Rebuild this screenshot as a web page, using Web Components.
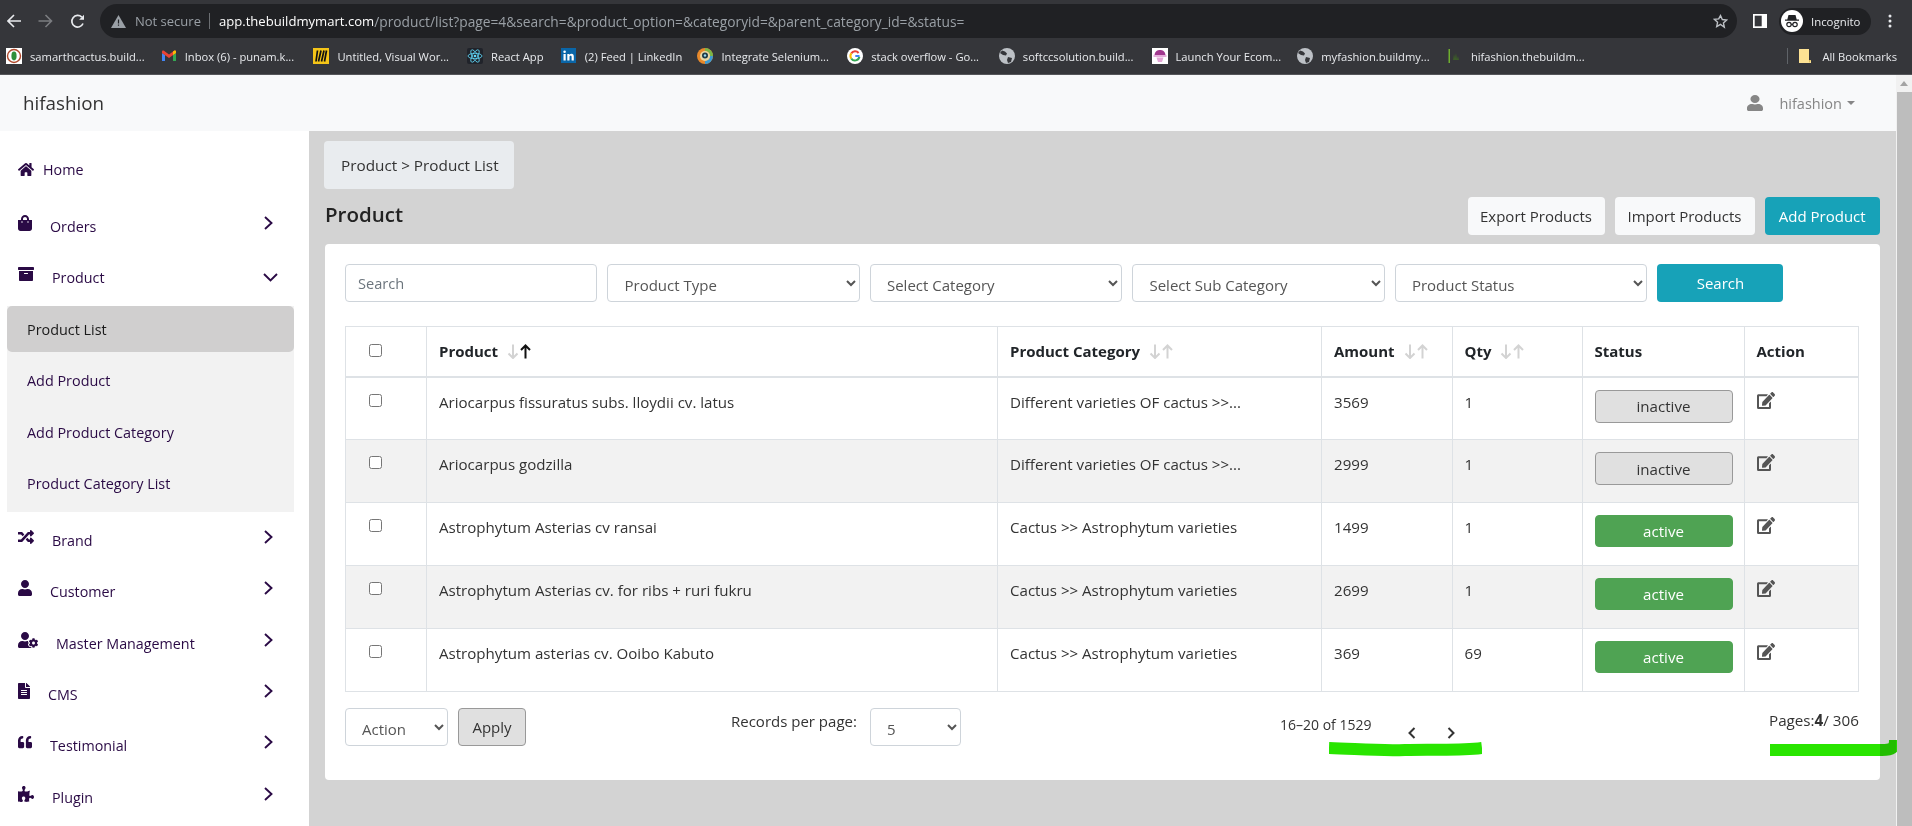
<!DOCTYPE html>
<html lang="en">
<head>
<meta charset="utf-8">
<title>hifashion</title>
<style>
  html, body { margin: 0; height: 826px; overflow: hidden; background: #d3d3d3; }
  body { font-family: "Open Sans", "Noto Sans", sans-serif; font-size: 15px; color: #212529; position: relative; }
</style>
</head>
<body>
<browser-chrome></browser-chrome>
<app-page>
  <top-nav slot="top" brand="hifashion" user="hifashion"></top-nav>
  <side-nav slot="side"></side-nav>
  <page-crumb>Product &gt; Product List</page-crumb>
  <page-head>Product</page-head>
  <product-card></product-card>
</app-page>
<marker-scribble kind="a"></marker-scribble>
<marker-scribble kind="b"></marker-scribble>

<script>
const FA = {
  home: ['0 0 576 512', 'M280.37 148.26L96 300.11V464a16 16 0 0 0 16 16l112.06-.29a16 16 0 0 0 15.92-16V368a16 16 0 0 1 16-16h64a16 16 0 0 1 16 16v95.64a16 16 0 0 0 16 16.05L464 480a16 16 0 0 0 16-16V300L295.67 148.26a12.19 12.19 0 0 0-15.3 0zM571.6 251.47L488 182.56V44.05a12 12 0 0 0-12-12h-56a12 12 0 0 0-12 12v72.61L318.47 43a48 48 0 0 0-61 0L4.34 251.47a12 12 0 0 0-1.6 16.9l25.5 31A12 12 0 0 0 45.15 301l235.22-193.74a12.19 12.19 0 0 1 15.3 0L530.9 301a12 12 0 0 0 16.9-1.6l25.5-31a12 12 0 0 0-1.7-16.93z'],
  bag: ['0 0 448 512', 'M352 160v-32C352 57.42 294.579 0 224 0 153.42 0 96 57.42 96 128v32H0v272c0 44.183 35.817 80 80 80h288c44.183 0 80-35.817 80-80V160h-96zm-192-32c0-35.29 28.71-64 64-64s64 28.71 64 64v32H160v-32zm160 120c-13.255 0-24-10.745-24-24s10.745-24 24-24 24 10.745 24 24-10.745 24-24 24zm-192 0c-13.255 0-24-10.745-24-24s10.745-24 24-24 24 10.745 24 24-10.745 24-24 24z'],
  archive: ['0 0 512 512', 'M32 448c0 17.7 14.3 32 32 32h384c17.7 0 32-14.3 32-32V160H32v288zm160-212c0-6.6 5.4-12 12-12h104c6.6 0 12 5.4 12 12v8c0 6.6-5.4 12-12 12H204c-6.6 0-12-5.4-12-12v-8zM480 32H32C14.3 32 0 46.3 0 64v48c0 8.8 7.2 16 16 16h480c8.8 0 16-7.2 16-16V64c0-17.7-14.3-32-32-32z'],
  random: ['0 0 512 512', 'M504.971 359.029c9.373 9.373 9.373 24.569 0 33.941l-80 79.984c-15.01 15.01-40.971 4.49-40.971-16.971V416h-58.785a12.004 12.004 0 0 1-8.773-3.812l-70.556-75.596 53.333-57.143L352 336h32v-39.981c0-21.438 25.943-31.998 40.971-16.971l80 79.981zM12 176h84l52.781 56.551 53.333-57.143-70.556-75.596A11.999 11.999 0 0 0 122.785 96H12c-6.627 0-12 5.373-12 12v56c0 6.627 5.373 12 12 12zm372 0v39.984c0 21.46 25.961 31.98 40.971 16.971l80-79.984c9.373-9.373 9.373-24.569 0-33.941l-80-79.981C409.943 24.021 384 34.582 384 56.019V96h-58.785a12.004 12.004 0 0 0-8.773 3.812L96 336H12c-6.627 0-12 5.373-12 12v56c0 6.627 5.373 12 12 12h110.785c3.326 0 6.503-1.381 8.773-3.812L352 176h32z'],
  user: ['0 0 448 512', 'M224 256c70.7 0 128-57.3 128-128S294.7 0 224 0 96 57.3 96 128s57.3 128 128 128zm89.6 32h-16.7c-22.2 10.2-46.9 16-72.9 16s-50.6-5.8-72.9-16h-16.7C60.2 288 0 348.2 0 422.4V464c0 26.5 21.5 48 48 48h352c26.5 0 48-21.5 48-48v-41.6c0-74.2-60.2-134.4-134.4-134.4z'],
  usercog: ['0 0 640 512', 'M610.5 373.3c2.6-14.1 2.6-28.5 0-42.6l25.8-14.9c3-1.7 4.3-5.2 3.3-8.5-6.7-21.6-18.2-41.2-33.2-57.4-2.3-2.5-6-3.1-9-1.4l-25.8 14.9c-10.9-9.3-23.4-16.5-36.9-21.3v-29.8c0-3.4-2.4-6.4-5.7-7.1-22.3-5-45-4.8-66.2 0-3.3.7-5.7 3.7-5.7 7.1v29.8c-13.5 4.8-26 12-36.9 21.3l-25.8-14.9c-2.9-1.7-6.7-1.1-9 1.4-15 16.2-26.5 35.8-33.2 57.4-1 3.3.4 6.8 3.3 8.5l25.8 14.9c-2.6 14.1-2.6 28.5 0 42.6l-25.8 14.9c-3 1.7-4.3 5.2-3.3 8.5 6.7 21.6 18.2 41.1 33.2 57.4 2.3 2.5 6 3.1 9 1.4l25.8-14.9c10.9 9.3 23.4 16.5 36.9 21.3v29.8c0 3.4 2.4 6.4 5.7 7.1 22.3 5 45 4.8 66.2 0 3.3-.7 5.7-3.7 5.7-7.1v-29.8c13.5-4.8 26-12 36.9-21.3l25.8 14.9c2.9 1.7 6.7 1.1 9-1.4 15-16.2 26.5-35.8 33.2-57.4 1-3.3-.4-6.8-3.3-8.5l-25.8-14.9zM496 400.5c-26.8 0-48.5-21.8-48.5-48.5s21.8-48.5 48.5-48.5 48.5 21.8 48.5 48.5-21.7 48.5-48.5 48.5zM224 256c70.7 0 128-57.3 128-128S294.7 0 224 0 96 57.3 96 128s57.3 128 128 128zm201.2 226.5c-2.3-1.2-4.6-2.6-6.8-3.9l-7.9 4.6c-6 3.4-12.8 5.3-19.6 5.3-10.9 0-21.4-4.6-28.9-12.6-18.3-19.8-32.3-43.9-40.2-69.6-5.5-17.7 1.9-36.4 17.9-45.7l7.9-4.6c-.1-2.6-.1-5.2 0-7.8l-7.9-4.6c-16-9.2-23.4-28-17.9-45.7.9-2.9 2.2-5.8 3.2-8.7-3.8-.3-7.5-1.2-11.4-1.2h-16.7c-22.2 10.2-46.9 16-72.9 16s-50.6-5.8-72.9-16h-16.7C60.2 288 0 348.2 0 422.4V464c0 26.5 21.5 48 48 48h352c10.1 0 19.5-3.2 27.2-8.5-1.2-3.8-2-7.7-2-11.8v-9.2z'],
  file: ['0 0 384 512', 'M224 136V0H24C10.7 0 0 10.7 0 24v464c0 13.3 10.7 24 24 24h336c13.3 0 24-10.7 24-24V160H248c-13.2 0-24-10.8-24-24zm64 236c0 6.6-5.4 12-12 12H108c-6.6 0-12-5.4-12-12v-8c0-6.6 5.4-12 12-12h168c6.6 0 12 5.4 12 12v8zm0-64c0 6.6-5.4 12-12 12H108c-6.6 0-12-5.4-12-12v-8c0-6.6 5.4-12 12-12h168c6.6 0 12 5.4 12 12v8zm0-72v8c0 6.6-5.4 12-12 12H108c-6.6 0-12-5.4-12-12v-8c0-6.6 5.4-12 12-12h168c6.6 0 12 5.4 12 12zm96-114.1v6.1H256V0h6.1c6.4 0 12.5 2.5 17 7l97.9 98c4.5 4.5 7 10.6 7 16.9z'],
  quote: ['0 0 512 512', 'M464 256h-80v-64c0-35.3 28.7-64 64-64h8c13.3 0 24-10.7 24-24V56c0-13.3-10.7-24-24-24h-8c-88.4 0-160 71.6-160 160v240c0 26.5 21.5 48 48 48h128c26.5 0 48-21.5 48-48V304c0-26.5-21.5-48-48-48zm-288 0H96v-64c0-35.3 28.7-64 64-64h8c13.3 0 24-10.7 24-24V56c0-13.3-10.7-24-24-24h-8C71.6 32 0 103.6 0 192v240c0 26.5 21.5 48 48 48h128c26.5 0 48-21.5 48-48V304c0-26.5-21.5-48-48-48z'],
  puzzle: ['0 0 576 512', 'M519.442 288.651c-41.519 0-59.5 31.593-82.058 31.593C377.409 320.244 432 144 432 144s-196.288 80-196.288-3.297c0-35.827 36.288-46.25 36.288-85.985C272 19.216 243.885 0 210.539 0c-34.654 0-66.366 18.891-66.366 56.346 0 41.364 31.711 59.277 31.711 81.75C175.885 207.719 0 166.758 0 166.758v333.237s178.635 41.047 178.635-28.662c0-22.473-40-40.107-40-81.471 0-37.456 29.25-56.346 63.577-56.346 33.673 0 61.788 19.216 61.788 54.717 0 39.735-36.288 50.158-36.288 85.985 0 60.803 129.675 25.73 181.23 25.73 0 0-34.725-120.101 25.827-120.101 35.962 0 46.423 36.152 86.308 36.152C556.712 416 576 387.99 576 354.443c0-34.199-18.962-65.792-56.558-65.792z'],
  edit: ['0 0 576 512', 'M402.6 83.2l90.2 90.2c3.8 3.8 3.8 10 0 13.8L274.4 405.6l-92.8 10.3c-12.4 1.4-22.9-9.1-21.5-21.5l10.3-92.8L388.8 83.2c3.8-3.8 10-3.8 13.8 0zm162-22.9l-48.8-48.8c-15.2-15.2-39.9-15.2-55.2 0l-35.4 35.4c-3.8 3.8-3.8 10 0 13.8l90.2 90.2c3.8 3.8 10 3.8 13.8 0l35.4-35.4c15.2-15.3 15.2-40 0-55.2zM384 346.2V448H64V128h229.8c3.2 0 6.2-1.3 8.5-3.5l40-40c7.6-7.6 2.2-20.5-8.5-20.5H48C21.5 64 0 85.5 0 112v352c0 26.5 21.5 48 48 48h352c26.5 0 48-21.5 48-48V306.2c0-10.7-12.9-16-20.5-8.5l-40 40c-2.2 2.3-3.5 5.3-3.5 8.5z']
};

function faIcon(name, w, h) {
  const [vb, d] = FA[name];
  return `<svg width="${w}" height="${h}" viewBox="${vb}" fill="currentColor" preserveAspectRatio="none" style="display:block"><path d="${d}"/></svg>`;
}

const GLOBE = `<svg width="16" height="16" viewBox="0 0 16 16"><circle cx="8" cy="8" r="8" fill="#bdc1c6"/><path d="M3 2.5l3 1 2 2-1 2-3-.5-3-2zM9 9l4 1-1 4-3 1-1-3z" fill="#35363a"/></svg>`;
const BOOKMARKS = [
  { w: 115, t: 'samarthcactus.build...', i: `<svg width="16" height="16" viewBox="0 0 16 16"><rect width="16" height="16" fill="#fff"/><circle cx="8" cy="8" r="6.5" fill="none" stroke="#b0492c" stroke-width="1.4"/><ellipse cx="8" cy="8" rx="2.6" ry="4.4" fill="#2f8f3a"/></svg>` },
  { w: 113, t: 'Inbox (6) - punam.k...', i: `<svg width="16" height="16" viewBox="0 0 16 16"><path d="M1 13V5l3 2v6z" fill="#4285f4"/><path d="M12 13V7l3-2v8z" fill="#34a853"/><path d="M1 5V3.5C1 2.6 2 2 3 2.7L8 6.5 13 2.7C14 2 15 2.6 15 3.5V5l-7 5z" fill="#ea4335"/><path d="M12 7l3-2V3.5C15 2.6 14 2 13 2.7L12 3.5z" fill="#fbbc04"/></svg>` },
  { w: 114, t: 'Untitled, Visual Wor...', i: `<svg width="16" height="16" viewBox="0 0 16 16"><rect width="16" height="16" fill="#f5c518"/><path d="M4.5 2.5L3 13.5M8 2.5L5.5 13.5M11 2.5L8.5 13.5M13.5 2.5L11.5 13.5" stroke="#111" stroke-width="1.7"/></svg>` },
  { w: 54, t: 'React App', i: `<svg width="16" height="16" viewBox="0 0 16 16"><rect width="16" height="16" rx="2" fill="#20232a"/><g fill="none" stroke="#61dafb" stroke-width=".8"><ellipse cx="8" cy="8" rx="7" ry="2.7"/><ellipse cx="8" cy="8" rx="7" ry="2.7" transform="rotate(60 8 8)"/><ellipse cx="8" cy="8" rx="7" ry="2.7" transform="rotate(120 8 8)"/></g><circle cx="8" cy="8" r="1.3" fill="#61dafb"/></svg>` },
  { w: 97, t: '(2) Feed | LinkedIn', i: `<svg width="15" height="15" viewBox="0 0 15 15"><rect width="15" height="15" fill="#0a66a8"/><rect x="2.5" y="6" width="2.2" height="6.5" fill="#fff"/><circle cx="3.6" cy="3.8" r="1.3" fill="#fff"/><path d="M6.3 6h2.1v1c.5-.8 1.2-1.2 2.2-1.2 1.5 0 2.2 1 2.2 2.7v4h-2.2V9c0-.8-.3-1.3-1-1.3S8.5 8.2 8.5 9v3.5H6.3z" fill="#fff"/></svg>` },
  { w: 110, t: 'Integrate Selenium...', i: `<svg width="16" height="16" viewBox="0 0 16 16"><circle cx="8" cy="8" r="8" fill="#e8892b"/><path d="M8 0a8 8 0 0 1 8 8h-3a5 5 0 0 0-5-5z" fill="#7ab648"/><path d="M16 8a8 8 0 0 1-8 8v-3a5 5 0 0 0 5-5z" fill="#3b9bd6"/><circle cx="8" cy="8" r="5" fill="#e9d8a6"/><circle cx="8" cy="7.5" r="3" fill="#1d3b4a"/><circle cx="8" cy="7.5" r="1.2" fill="#9fd8ef"/></svg>` },
  { w: 112, t: 'stack overflow - Go...', i: `<svg width="16" height="16" viewBox="0 0 16 16"><circle cx="8" cy="8" r="8" fill="#fff"/><g fill="none" stroke-width="2"><path d="M11.6 5A4.5 4.5 0 0 0 4.3 5.4" stroke="#ea4335"/><path d="M4.3 5.4a4.5 4.5 0 0 0 0 5.2" stroke="#fbbc04"/><path d="M4.3 10.6A4.5 4.5 0 0 0 12.4 8.8" stroke="#34a853"/><path d="M12.5 8H8.3" stroke="#4285f4"/></g></svg>` },
  { w: 113, t: 'softccsolution.build...', i: GLOBE },
  { w: 106, t: 'Launch Your Ecom...', i: `<svg width="16" height="16" viewBox="0 0 16 16"><rect width="16" height="16" fill="#fff"/><path d="M2.5 7C3 3 5.5 2 8 2s5 1 5.5 5z" fill="#a2388f"/><path d="M1.5 7.5h13v1h-13z" fill="#d05bb8"/><path d="M4.5 9.500h7L10 14H6z" fill="#e6a7d8"/></svg>` },
  { w: 110, t: 'myfashion.buildmy...', i: GLOBE },
  { w: 117, t: 'hifashion.thebuildm...', i: `<svg width="16" height="16" viewBox="0 0 16 16"><path d="M1.5 1h1.5v14H1.5z" fill="#6fae2e"/><path d="M6 12l1-6 1 4 1-5 1 6 1-3 1 4z" fill="#3c5a2a"/></svg>` }
];

class BrowserChrome extends HTMLElement {
  constructor() {
    super();
    this.attachShadow({ mode: 'open' });
  }
  connectedCallback() {
    const marks = BOOKMARKS.map(b => `<span class="bm"><span class="fav">${b.i}</span><span class="bt" style="width:${b.w}px">${b.t}</span></span>`).join('');
    this.shadowRoot.innerHTML = `
      <style>
        :host { display: block; height: 75px; background: #35363a; color: #e8eaed; font-family: "Open Sans", sans-serif; box-sizing: border-box; border-bottom: 1px solid #55565a; }
        .tool { display: flex; align-items: center; height: 34px; padding-top: 4px; }
        .navs { display: flex; align-items: center; width: 100px; padding-left: 7px; box-sizing: border-box; gap: 17px; }
        .omni { width: 1637px; height: 34px; background: #202124; border-radius: 17px; display: flex; align-items: center; padding-left: 11px; box-sizing: border-box; font-size: 13px; white-space: nowrap; }
        .ns { color: #9aa0a6; margin-left: 9px; }
        .sep { width: 1px; height: 16px; background: #6b6e72; margin: 0 9px 0 8px; }
        .host { color: #fff; font-size: 13.1px; }
        .path { color: #9aa0a6; font-size: 13.75px; }
        .star { margin-left: auto; margin-right: 9px; display: block; }
        .panel { margin-left: 16px; }
        .pill { margin-left: 12px; width: 92px; height: 27px; border-radius: 14px; background: #202124; display: flex; align-items: center; padding-left: 2px; box-sizing: border-box; font-size: 11.4px; }
        .pill b { font-weight: 400; margin-left: 8px; }
        .dots { margin-left: 17px; }
        .marks { display: flex; align-items: center; height: 36px; padding: 0 0 0 6px; font-size: 11.2px; white-space: nowrap; }
        .bm { display: flex; align-items: center; margin-right: 15.7px; }
        .fav { width: 16px; height: 16px; margin-right: 8px; display: block; }
        .fav svg { display: block; }
        .bt { display: block; overflow: hidden; color: #e8eaed; }
        .all { margin-left: auto; display: flex; align-items: center; padding-right: 15px; }
        .all i { width: 1px; height: 16px; background: #5f6368; margin-right: 11px; }
        .all span { margin-left: 11px; }
      </style>
      <div class="tool">
        <div class="navs">
          <svg width="14" height="14" viewBox="0 0 14 14" fill="none" stroke="#e8eaed" stroke-width="1.6"><path d="M14 7H1.500M7 1L1 7l6 6"/></svg>
          <svg width="15" height="14" viewBox="0 0 14 14" fill="none" stroke="#7b7d80" stroke-width="1.6"><path d="M0 7h12.500M7 1l6 6-6 6"/></svg>
          <svg width="15" height="15" viewBox="0 0 15 15" fill="none" stroke="#e8eaed" stroke-width="1.7"><path d="M13 9.500A5.800 5.800 0 1 1 11.800 3.200"/><path d="M14 .8v4.900H9.100z" fill="#e8eaed" stroke="none"/></svg>
        </div>
        <div class="omni">
          <svg width="15" height="13" viewBox="0 0 15 13"><path d="M7.500 0L15 13H0z" fill="#9aa0a6"/><path d="M6.900 4.500h1.200v4H6.900zM6.900 9.500h1.200v1.200H6.900z" fill="#202124"/></svg>
          <span class="ns">Not secure</span><span class="sep"></span><span class="host">app.thebuildmymart.com</span><span class="path">/product/list?page=4&amp;search=&amp;product_option=&amp;categoryid=&amp;parent_category_id=&amp;status=</span>
          <svg class="star" width="15" height="15" viewBox="0 0 24 24" fill="none" stroke="#bdc1c6" stroke-width="2.2"><path d="M12 2.500l2.900 6.300 6.900.8-5.100 4.700 1.400 6.800L12 16.700l-6.100 3.400 1.400-6.800-5.100-4.700 6.900-.8z"/></svg>
        </div>
        <svg class="panel" width="14" height="14" viewBox="0 0 14 14"><rect width="14" height="14" fill="#fff"/><rect x="1.7" y="1.7" width="7" height="10.6" fill="#35363a"/></svg>
        <div class="pill">
          <svg width="22" height="22" viewBox="0 0 22 22"><circle cx="11" cy="11" r="11" fill="#fff"/><path d="M7.500 5h7l1.200 4.500H6.300zM4 9.500h14v1.200H4z" fill="#202124"/><g fill="none" stroke="#202124" stroke-width="1.2"><circle cx="8" cy="14.5" r="2.2"/><circle cx="14" cy="14.5" r="2.2"/><path d="M10.200 14.500h1.600"/></g></svg>
          <b>Incognito</b>
        </div>
        <svg class="dots" width="4" height="14" viewBox="0 0 4 14" fill="#e8eaed"><circle cx="2" cy="2" r="1.5"/><circle cx="2" cy="7" r="1.5"/><circle cx="2" cy="12" r="1.5"/></svg>
      </div>
      <div class="marks">
        ${marks}
        <div class="all"><i></i><svg width="12" height="14" viewBox="0 0 12 14"><path d="M0 0h10v11h2v3H0z" fill="#fde293"/><path d="M10 11h2l-2 3z" fill="#d9b95c"/></svg><span>All Bookmarks</span></div>
      </div>`;
  }
}

class TopNav extends HTMLElement {
  constructor() {
    super();
    this.attachShadow({ mode: 'open' });
  }
  connectedCallback() {
    this.shadowRoot.innerHTML = `
      <style>
        :host { display: flex; align-items: center; height: 56px; background: #f8f9fa; padding: 0 41px 0 23px; box-sizing: border-box; }
        .brand { font-size: 18.8px; color: #333; }
        .user { margin-left: auto; display: flex; align-items: center; color: #868686; font-size: 14.5px; }
        .user svg { margin-right: 16px; }
        .caret { margin-left: 5px; border-top: 4px solid #868686; border-left: 4px solid transparent; border-right: 4px solid transparent; }
      </style>
      <span class="brand">${this.getAttribute('brand')}</span>
      <span class="user">${faIcon('user', 16, 16)}<span>${this.getAttribute('user')}</span><span class="caret"></span></span>`;
  }
}

class NavRow extends HTMLElement {
  constructor() {
    super();
    this.attachShadow({ mode: 'open' });
  }
  connectedCallback() {
    const [icon, w, h] = this.getAttribute('icon').split(' ');
    const lift = this.hasAttribute('level') ? 0 : 7;
    const chev = this.getAttribute('chev');
    let chevron = '';
    if (chev === 'right') chevron = `<svg class="chev" width="9" height="14" viewBox="0 0 9 14" fill="none" stroke="#2a0a45" stroke-width="1.9"><path d="M1 1l6.500 6L1 13"/></svg>`;
    if (chev === 'down') chevron = `<svg class="chev down" width="15" height="9" viewBox="0 0 15 9" fill="none" stroke="#2a0a45" stroke-width="1.9"><path d="M1 1l6.500 6.500L14 1"/></svg>`;
    this.shadowRoot.innerHTML = `
      <style>
        :host { display: flex; align-items: center; height: 51px; padding: 0 36px 0 18px; color: #2a0a45; font-size: 14.3px; }
        .ic { flex: none; margin-bottom: ${lift}px; width: ${this.getAttribute('tx') - 18}px; }
        .tx { margin-bottom: 1px; }
        .chev { margin-left: auto; margin-bottom: 7px; }
        .down { margin-bottom: 0; margin-right: -5px; }
      </style>
      <span class="ic">${faIcon(icon, w, h)}</span>
      <span class="tx"><slot></slot></span>
      ${chevron}`;
  }
}

class SubItem extends HTMLElement {
  constructor() {
    super();
    this.attachShadow({ mode: 'open' });
  }
  connectedCallback() {
    this.shadowRoot.innerHTML = `
      <style>
        :host { display: flex; align-items: center; padding-left: 20px; color: #2a0a45; border-radius: 5px; font-size: 14.4px; }
        :host([active]) { background: #d0cfcf; color: #1a1a1a; }
      </style>
      <slot></slot>`;
  }
}

class SideNav extends HTMLElement {
  constructor() {
    super();
    this.attachShadow({ mode: 'open' });
  }
  connectedCallback() {
    this.shadowRoot.innerHTML = `
      <style>
        :host { display: block; width: 309px; flex: none; background: #fff; padding-top: 13px; box-sizing: border-box; height: 695px; overflow: hidden; }
        .sub { margin: 3px 15px 3px 7px; background: #f2f2f2; height: 206px; display: grid; grid-template-rows: 46px 57px 46px 57px; }
        .m6 { margin-top: 6px; }
        .m1 { margin-top: 1px; }
      </style>
      <nav-row icon="home 16 15" tx="43" level>Home</nav-row>
      <nav-row class="m6" icon="bag 14 16" tx="50" chev="right">Orders</nav-row>
      <nav-row icon="archive 16 16" tx="52" chev="down">Product</nav-row>
      <div class="sub">
        <sub-item active>Product List</sub-item>
        <sub-item>Add Product</sub-item>
        <sub-item>Add Product Category</sub-item>
        <sub-item>Product Category List</sub-item>
      </div>
      <nav-row icon="random 16 16" tx="52" chev="right">Brand</nav-row>
      <nav-row icon="user 14 16" tx="50" chev="right">Customer</nav-row>
      <nav-row class="m1" icon="usercog 20 16" tx="56" chev="right">Master Management</nav-row>
      <nav-row icon="file 12 16" tx="48" chev="right">CMS</nav-row>
      <nav-row icon="quote 14 14" tx="50" chev="right">Testimonial</nav-row>
      <nav-row class="m1" icon="puzzle 16 16" tx="52" chev="right">Plugin</nav-row>`;
  }
}

class PageCrumb extends HTMLElement {
  constructor() {
    super();
    this.attachShadow({ mode: 'open' });
    this.shadowRoot.innerHTML = `
      <style>
        :host { display: flex; align-items: center; width: 190px; height: 48px; margin: 10px 0 0 15px; padding-left: 17px; box-sizing: border-box; background: #e9ecef; border-radius: 4px; color: #333; font-size: 15.3px; }
      </style>
      <slot></slot>`;
  }
}

class PageHead extends HTMLElement {
  constructor() {
    super();
    this.attachShadow({ mode: 'open' });
    this.shadowRoot.innerHTML = `
      <style>
        :host { display: flex; align-items: center; height: 38px; margin: 8px 16px 0 16px; }
        h2 { margin: 0 0 4px; font-size: 20.5px; font-weight: 600; color: #222; }
        .acts { margin-left: auto; display: flex; gap: 10px; }
        button { height: 38px; border: 0; border-radius: 4px; background: #f8f9fa; color: #333; font: inherit; padding: 0; }
        .add { background: #17a2b8; color: #fff; }
      </style>
      <h2><slot></slot></h2>
      <div class="acts">
        <button style="width:137px">Export Products</button>
        <button style="width:140px">Import Products</button>
        <button class="add" style="width:115.5px">Add Product</button>
      </div>`;
  }
}

class StatusPill extends HTMLElement {
  constructor() {
    super();
    this.attachShadow({ mode: 'open' });
    this.shadowRoot.innerHTML = `
      <style>
        :host { display: flex; align-items: center; justify-content: center; width: 138px; height: 33px; box-sizing: border-box; border: 1px solid #999; border-radius: 4px; background: #e0e0e0; color: #333; }
        :host([state="active"]) { background: #4fa353; border-color: #4fa353; color: #fff; height: 32px; }
      </style>
      <slot></slot>`;
  }
}

const ROWS = [
  ['Ariocarpus fissuratus subs. lloydii cv. latus', 'Different varieties OF cactus >>...', '3569', '1', 'inactive'],
  ['Ariocarpus godzilla', 'Different varieties OF cactus >>...', '2999', '1', 'inactive'],
  ['Astrophytum Asterias cv ransai', 'Cactus >> Astrophytum varieties', '1499', '1', 'active'],
  ['Astrophytum Asterias cv. for ribs + ruri fukru', 'Cactus >> Astrophytum varieties', '2699', '1', 'active'],
  ['Astrophytum asterias cv. Ooibo Kabuto', 'Cactus >> Astrophytum varieties', '369', '69', 'active']
];

function sortArrows(up) {
  return `<svg class="sort" width="25" height="15" viewBox="0 0 25 15" fill="none" stroke-width="2"><path d="M6 0.500V14M1.500 9.500L6 14l4.500-4.500" stroke="#d3d3d3"/><path d="M18.500 14.500V1.500M14 6L18.500 1.500 23 6" stroke="${up}"/></svg>`;
}

class ProductTable extends HTMLElement {
  constructor() {
    super();
    this.attachShadow({ mode: 'open' });
  }
  connectedCallback() {
    const rows = ROWS.map(r => `
      <tr>
        <td class="ck"><input type="checkbox"></td>
        <td>${r[0].replace(/>/g, '&gt;')}</td>
        <td>${r[1].replace(/>/g, '&gt;')}</td>
        <td>${r[2]}</td>
        <td>${r[3]}</td>
        <td class="st"><status-pill state="${r[4]}">${r[4]}</status-pill></td>
        <td class="ed">${faIcon('edit', 18, 17)}</td>
      </tr>`).join('');
    this.shadowRoot.innerHTML = `
      <style>
        :host { display: block; margin-top: 24px; color: #333; font-size: 15.1px; }
        table { border-collapse: collapse; table-layout: fixed; width: 1513px; }
        th, td { border: 1px solid #dee2e6; text-align: left; box-sizing: border-box; }
        th { height: 50px; padding: 0 12px; border-bottom-width: 2px; font-weight: 700; color: #212529; font-size: 15px; }
        th span { display: inline-flex; align-items: center; gap: 9px; }
        td { height: 63px; padding: 12px 12px 0; vertical-align: top; line-height: 24px; }
        tbody tr:nth-child(even) td { background: #f2f2f2; }
        input { width: 13px; height: 13px; margin: 0; display: block; }
        .ck { padding: 0 0 0 23px; }
        th.ck { vertical-align: middle; }
        th.ck input { margin-top: -2px; }
        td.ck input { margin-top: 16px; }
        td.st { padding-top: 12px; }
        td.ed { padding-top: 14px; color: #555; }
        .sort { flex: none; display: block; }
      </style>
      <table>
        <colgroup><col style="width:81px"><col style="width:571px"><col style="width:324px"><col style="width:130.5px"><col style="width:130px"><col style="width:162px"><col style="width:114.5px"></colgroup>
        <thead><tr>
          <th class="ck"><input type="checkbox"></th>
          <th><span>Product ${sortArrows('#111')}</span></th>
          <th><span>Product Category ${sortArrows('#d3d3d3')}</span></th>
          <th><span>Amount ${sortArrows('#d3d3d3')}</span></th>
          <th><span>Qty ${sortArrows('#d3d3d3')}</span></th>
          <th>Status</th>
          <th>Action</th>
        </tr></thead>
        <tbody>${rows}</tbody>
      </table>`;
  }
}

const FIELD_CSS = `
  select, input[type=text] { height: 38px; box-sizing: border-box; border: 1px solid #ced4da; border-radius: 4px; background: #fff; color: #555; font: inherit; padding: 0 12px; display: block; }
  input[type=text] { font-size: 14.6px; }
  input[type=text]::placeholder { color: #6c757d; opacity: 1; }
  select { padding-top: 3px; padding-left: 12px; }
`;

class FilterBar extends HTMLElement {
  constructor() {
    super();
    this.attachShadow({ mode: 'open' });
    this.shadowRoot.innerHTML = `
      <style>
        :host { display: grid; grid-template-columns: repeat(5, 252.3px) 126px; column-gap: 10.2px; }
        ${FIELD_CSS}
        select, input[type=text] { width: 100%; }
        button { height: 38px; border: 0; border-radius: 4px; background: #17a2b8; color: #fff; font: inherit; }
      </style>
      <input type="text" placeholder="Search">
      <select><option>Product Type</option></select>
      <select><option>Select Category</option></select>
      <select><option>Select Sub Category</option></select>
      <select><option>Product Status</option></select>
      <button>Search</button>`;
  }
}

class TableFooter extends HTMLElement {
  constructor() {
    super();
    this.attachShadow({ mode: 'open' });
    this.shadowRoot.innerHTML = `
      <style>
        :host { display: grid; grid-template-columns: 386px 549px 489px 1fr; margin-top: 16px; color: #333; }
        ${FIELD_CSS}
        .left, .rec { display: flex; }
        .left { gap: 10px; }
        .apply { width: 68px; height: 38px; border: 1px solid #999; border-radius: 4px; background: #e0e0e0; color: #333; font: inherit; padding: 0; }
        .rec span { margin-right: 13px; line-height: 24px; height: 24px; margin-top: 1px; }
        .range { font-size: 14px; display: flex; align-items: flex-start; padding-top: 7px; }
        .range svg { display: block; margin-top: 12px; }
        .prev { margin-left: 37px; }
        .next { margin-left: 31px; }
        .pages { line-height: 24px; margin-top: 0; white-space: nowrap; font-size: 15.2px; }
      </style>
      <div class="left">
        <select style="width:103px"><option>Action</option></select>
        <button class="apply">Apply</button>
      </div>
      <div class="rec">
        <span>Records per page:</span>
        <select style="width:91px"><option>5</option></select>
      </div>
      <div class="range">
        <span>16–20 of 1529</span>
        <svg class="prev" width="8" height="12" viewBox="0 0 8 12" fill="none" stroke="#333" stroke-width="2"><path d="M6.500 1L1.500 6l5 5"/></svg>
        <svg class="next" width="8" height="12" viewBox="0 0 8 12" fill="none" stroke="#333" stroke-width="2"><path d="M1.500 1l5 5-5 5"/></svg>
      </div>
      <div class="pages">Pages:<b>4</b>/ 306</div>`;
  }
}

class ProductCard extends HTMLElement {
  constructor() {
    super();
    this.attachShadow({ mode: 'open' });
    this.shadowRoot.innerHTML = `
      <style>
        :host { display: block; margin: 9px 16px 0 16px; height: 536px; box-sizing: border-box; padding: 20px; background: #fff; border-radius: 4px; }
      </style>
      <filter-bar></filter-bar>
      <product-table></product-table>
      <table-footer></table-footer>`;
  }
}

class AppPage extends HTMLElement {
  constructor() {
    super();
    this.attachShadow({ mode: 'open' });
    this.shadowRoot.innerHTML = `
      <style>
        :host { display: flex; height: 751px; overflow: hidden; }
        .col { flex: 1; min-width: 0; display: flex; flex-direction: column; }
        .row { flex: 1; display: flex; min-height: 0; background: #d3d3d3; }
        .main { flex: 1; min-width: 0; }
        .bar { flex: none; width: 16px; background: #f1f1f1; display: flex; flex-direction: column; align-items: flex-end; }
        .arrow { height: 17px; display: flex; align-items: center; justify-content: center; width: 16px; }
        .thumb { flex: 1; width: 15px; background: #bdbdbd; }
      </style>
      <div class="col">
        <slot name="top"></slot>
        <div class="row">
          <slot name="side"></slot>
          <div class="main"><slot></slot></div>
        </div>
      </div>
      <div class="bar">
        <div class="arrow"><svg width="8" height="5" viewBox="0 0 8 5"><path d="M4 0l4 5H0z" fill="#a3a3a3"/></svg></div>
        <div class="thumb"></div>
      </div>`;
  }
}

const SCRIBBLES = {
  a: { left: 1329, top: 739, w: 153, h: 20, d: 'M0 9C30 10 50 12 76 11S130 12 153 9', sw: 12 },
  b: { left: 1770, top: 737, w: 127, h: 22, d: 'M0 13H112C122 13 125 11 125 3', sw: 12 }
};

class MarkerScribble extends HTMLElement {
  constructor() {
    super();
    this.attachShadow({ mode: 'open' });
  }
  connectedCallback() {
    const s = SCRIBBLES[this.getAttribute('kind')];
    this.shadowRoot.innerHTML = `
      <style>
        :host { position: absolute; left: ${s.left}px; top: ${s.top}px; width: ${s.w}px; height: ${s.h}px; mix-blend-mode: multiply; }
        svg { display: block; }
      </style>
      <svg width="${s.w}" height="${s.h}" viewBox="0 0 ${s.w} ${s.h}" fill="none"><path d="${s.d}" stroke="#29e500" stroke-width="${s.sw}"/></svg>`;
  }
}

customElements.define('browser-chrome', BrowserChrome);
customElements.define('top-nav', TopNav);
customElements.define('nav-row', NavRow);
customElements.define('sub-item', SubItem);
customElements.define('side-nav', SideNav);
customElements.define('page-crumb', PageCrumb);
customElements.define('page-head', PageHead);
customElements.define('status-pill', StatusPill);
customElements.define('product-table', ProductTable);
customElements.define('filter-bar', FilterBar);
customElements.define('table-footer', TableFooter);
customElements.define('product-card', ProductCard);
customElements.define('app-page', AppPage);
customElements.define('marker-scribble', MarkerScribble);
</script>
</body>
</html>
